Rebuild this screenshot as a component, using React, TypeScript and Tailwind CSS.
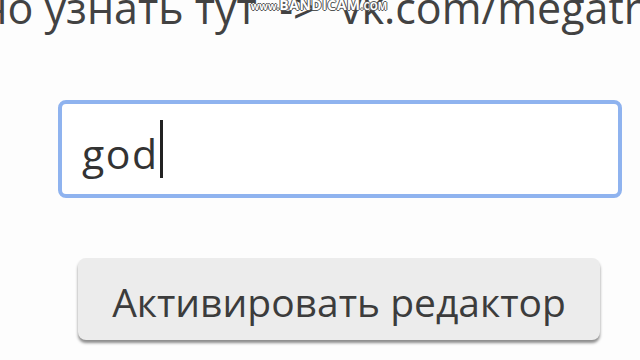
import React from "react";

const App = () => {
  return (
    <div
      className="relative w-[640px] h-[360px] overflow-hidden bg-[#fdfdfd] text-[#3a3a3a]"
      style={{ fontFamily: '"Open Sans", "Noto Sans", sans-serif' }}
    >
      {/* recorder watermark */}
      <div className="absolute left-0 top-0 z-10 flex w-full justify-center">
        <span className="ml-[-2px] mt-[-2px] flex items-baseline font-bold leading-none text-white [text-shadow:1px_0_0_#555,-1px_0_0_#555,0_1px_0_#555,0_-1px_0_#555]">
          <span className="text-[10px]">www.</span>
          <span className="text-[14px] tracking-[0.5px]">BANDICAM</span>
          <span className="text-[10px]">.COM</span>
        </span>
      </div>

      <div className="flex flex-col">
        <div className="mt-[-18px] ml-[-355px] whitespace-nowrap text-[43px] leading-[52px] text-[#424242]">
          Подробнее можно узнать тут{"\u00a0"} -&gt;{"\u00a0"} vk.com/megatron
        </div>

        <div className="mt-[66px] ml-[58px] flex h-[98px] w-[564px] items-center rounded-[8px] border-[4px] border-[#8fb3ef] bg-white pl-[20px]">
          <span className="mt-[8px] text-[41px] leading-none tracking-[1.5px] text-[#333]">
            god
          </span>
          <span className="ml-[1px] h-[58px] w-[3px] bg-[#222]" />
        </div>

        <div className="mt-[60px] ml-[78px] flex h-[82px] w-[522px] items-center justify-center rounded-[8px] bg-[#ececec] shadow-[0_3px_3px_rgba(0,0,0,0.45)]">
          <span className="mt-[4px] text-[39px] leading-none text-[#3c3c3c]">
            Активировать редактор
          </span>
        </div>
      </div>
    </div>
  );
};

export default App;
